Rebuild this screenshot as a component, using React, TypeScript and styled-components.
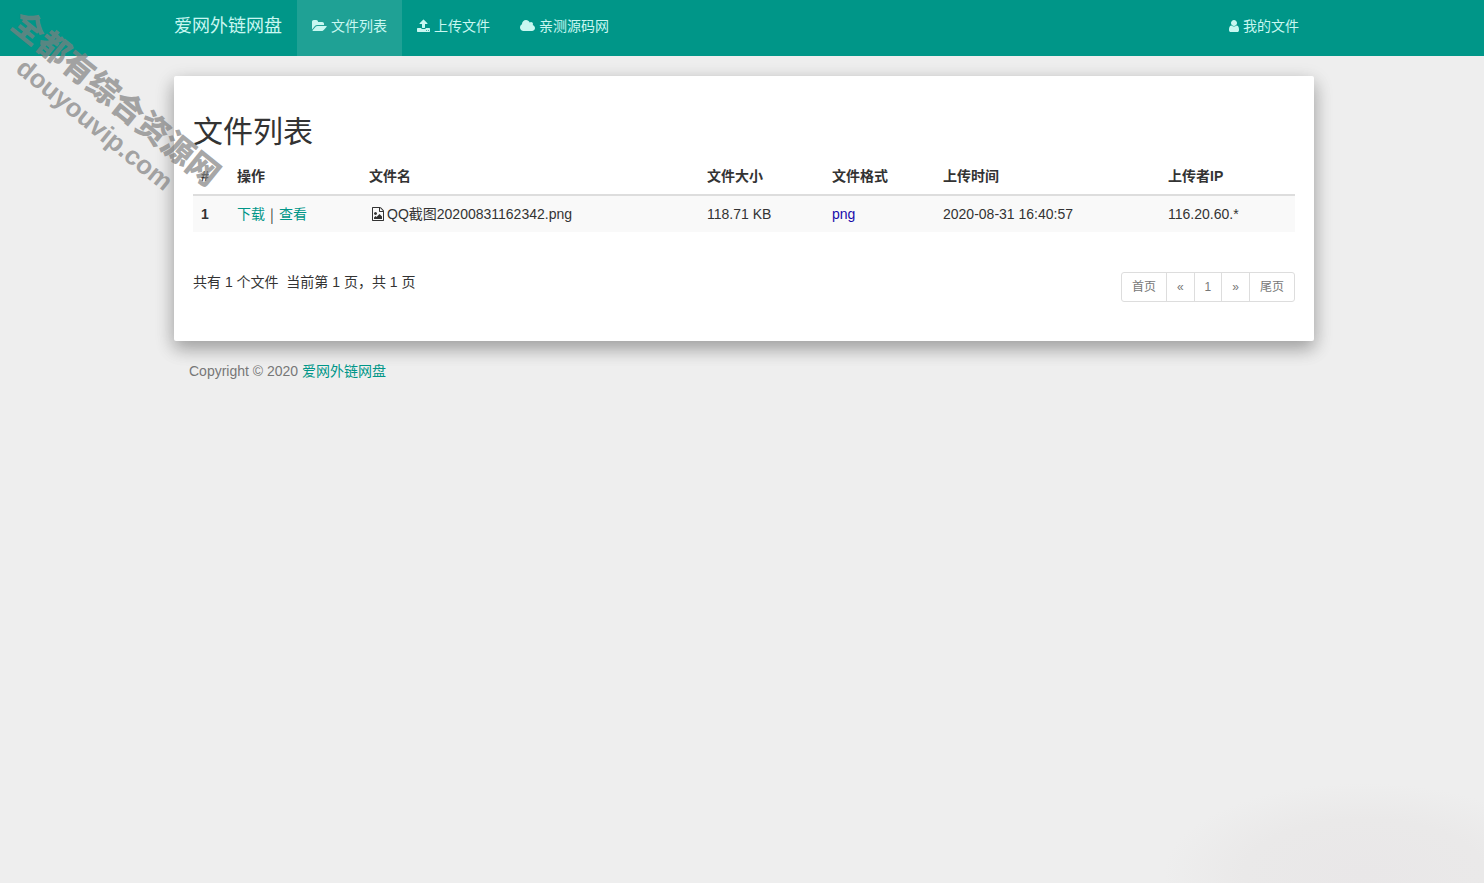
import React from "react";
import styled, { createGlobalStyle } from "styled-components";

const GlobalStyle = createGlobalStyle`
  *, *::before, *::after { box-sizing: border-box; }
  body {
    margin: 0;
    background: #eee;
    color: #333;
    font-family: "Liberation Sans", "Noto Sans CJK SC", sans-serif;
    font-size: 14px;
    line-height: 20px;
  }
  a { color: #009688; text-decoration: none; }
`;

const Page = styled.div`
  position: relative;
  min-height: 100vh;
  overflow: hidden;
  background:
    radial-gradient(ellipse 200px 90px at right 120px bottom 10px, #e9e7e8 0%, #eae9e9 60%, transparent 100%),
    #eee;
`;

const Container = styled.div`
  max-width: 1144px;
  margin: 0 auto;
  padding-left: 4px;
`;

const Header = styled.header`
  background: #009688;
`;

const Bar = styled(Container)`
  display: flex;
  min-height: 56px;
`;

const Brand = styled.a`
  padding: 16px 15px 20px 0;
  font-size: 18px;
  color: #c8f7f1;
`;

const NavLink = styled.a<{ $active?: boolean; $end?: boolean }>`
  display: flex;
  align-items: center;
  gap: 4px;
  padding: 16px 15px 20px;
  margin-left: ${(p) => (p.$end ? "auto" : "0")};
  color: #c8f7f1;
  background: ${(p) => (p.$active ? "#1fa195" : "transparent")};
`;

const NavGroup = styled.nav`
  display: flex;
  flex: 1;
`;

const Card = styled.main`
  margin-top: 20px;
  padding: 39px 19px;
  background: #fff;
  border-radius: 2px;
  box-shadow: 0 8px 17px 0 rgba(0, 0, 0, 0.2), 0 6px 20px 0 rgba(0, 0, 0, 0.19);
`;

const Title = styled.h2`
  margin: 0 0 10px;
  font-size: 30px;
  font-weight: 400;
  line-height: 33px;
`;

const FileTable = styled.table`
  width: 100%;
  border-collapse: collapse;
  table-layout: fixed;
  margin-bottom: 40px;
  th, td { padding: 8px; text-align: left; vertical-align: top; }
  thead th { border-bottom: 2px solid #ddd; }
  tbody tr:nth-child(odd) { background: #f9f9f9; }
`;

const Col = styled.col<{ $w?: number }>`
  width: ${(p) => (p.$w ? `${p.$w}px` : "auto")};
`;

const Actions = styled.div`
  display: flex;
`;

const Separator = styled.span`
  width: 14px;
  text-align: center;
  font-family: "Noto Sans CJK SC", sans-serif;
`;

const FileName = styled.span`
  display: flex;
  align-items: center;
`;

const IconSlot = styled.span`
  display: flex;
  justify-content: center;
  width: 18px;
`;

const Format = styled.span`
  color: #1a0dab;
`;

const TableFooter = styled.div`
  display: flex;
  justify-content: space-between;
  align-items: flex-start;
`;

const Summary = styled.p`
  margin: 0;
  white-space: pre-wrap;
`;

const Pager = styled.ul`
  display: flex;
  margin: 0;
  padding: 0;
  list-style: none;
  font-size: 12px;
  line-height: 18px;
`;

const PagerLink = styled.a`
  display: block;
  padding: 5px 10px;
  border: 1px solid #ddd;
  color: #777;
  li + li > & { margin-left: -1px; }
  li:first-child > & { border-radius: 3px 0 0 3px; }
  li:last-child > & { border-radius: 0 3px 3px 0; }
`;

const Footer = styled.footer`
  padding: 20px 15px;
  color: #777;
`;

const Watermark = styled.div`
  position: absolute;
  left: -23px;
  top: 79px;
  width: 256px;
  text-align: center;
  white-space: nowrap;
  font-weight: 900;
  font-size: 32px;
  line-height: 33px;
  color: rgba(128, 128, 128, 0.7);
  transform: rotate(39deg);
  pointer-events: none;
`;

const WatermarkSite = styled.div`
  font-size: 26px;
`;

const Glyph = ({ box, width, d }: { box: string; width: number; d: string }) => (
  <svg viewBox={box} width={width} height={14} fill="currentColor" aria-hidden="true">
    <path d={d} />
  </svg>
);

const FolderIcon = () => (
  <Glyph
    box="0 0 1920 1792"
    width={15}
    d="M1879 952q0 31-31 66l-336 396q-43 51-120.5 86.5t-143.5 35.5h-1088q-34 0-60.5-13t-26.5-43q0-31 31-66l336-396q43-51 120.5-86.5t143.5-35.5h1088q34 0 60.5 13t26.5 43zm-343-344v160h-832q-94 0-197 47.5t-164 119.5l-337 396-5 6q0-4-.5-12.5t-.5-12.5v-960q0-92 66-158t158-66h320q92 0 158 66t66 158v32h544q92 0 158 66t66 158z"
  />
);

const UploadIcon = () => (
  <Glyph
    box="64 0 1664 1792"
    width={13}
    d="M1344 1472q0-26-19-45t-45-19-45 19-19 45 19 45 45 19 45-19 19-45zm256 0q0-26-19-45t-45-19-45 19-19 45 19 45 45 19 45-19 19-45zm128-224v320q0 40-28 68t-68 28h-1472q-40 0-68-28t-28-68v-320q0-40 28-68t68-28h427q21 56 70.5 92t110.5 36h256q61 0 110.5-36t70.5-92h427q40 0 68 28t28 68zm-325-648q-17 40-59 40h-256v448q0 26-19 45t-45 19h-256q-26 0-45-19t-19-45v-448h-256q-42 0-59-40-17-39 14-69l448-448q18-19 45-19t45 19l448 448q31 30 14 69z"
  />
);

const CloudIcon = () => (
  <Glyph
    box="64 0 1920 1792"
    width={15}
    d="M1984 1152q0 159-112.5 271.5t-271.5 112.5h-1088q-185 0-316.5-131.5t-131.5-316.5q0-132 71-241.5t187-163.5q-2-28-2-43 0-212 150-362t362-150q158 0 286.5 88t187.5 230q70-62 166-62 106 0 181 75t75 181q0 75-41 138 129 30 213 134.5t84 239.5z"
  />
);

const UserIcon = () => (
  <Glyph
    box="256 0 1280 1792"
    width={10}
    d="M1536 1399q0 109-62.5 187t-150.5 78h-854q-88 0-150.5-78t-62.5-187q0-85 8.5-160.5t31.5-152 58.5-131 94-89 134.5-34.5q131 128 313 128t313-128q76 0 134.5 34.5t94 89 58.5 131 31.5 152 8.5 160.5zm-256-887q0 159-112.5 271.5t-271.5 112.5-271.5-112.5-112.5-271.5 112.5-271.5 271.5-112.5 271.5 112.5 112.5 271.5z"
  />
);

const ImageFileIcon = () => (
  <Glyph
    box="128 0 1536 1792"
    width={12}
    d="M1596 380q28 28 48 76t20 88v1152q0 40-28 68t-68 28h-1344q-40 0-68-28t-28-68v-1600q0-40 28-68t68-28h896q40 0 88 20t76 48zm-444-244v376h376q-10-29-22-41l-313-313q-12-12-41-22zm384 1528v-1024h-416q-40 0-68-28t-28-68v-416h-768v1536h1280zm-128-448v320h-1024v-192l192-192 128 128 384-384zm-832-192q-80 0-136-56t-56-136 56-136 136-56 136 56 56 136-56 136-136 56z"
  />
);

const headings = ["#", "操作", "文件名", "文件大小", "文件格式", "上传时间", "上传者IP"];
const pages = ["首页", "«", "1", "»", "尾页"];

export default function App() {
  return (
    <Page>
      <GlobalStyle />
      <Header>
        <Bar>
          <Brand href="#">爱网外链网盘</Brand>
          <NavGroup>
            <NavLink href="#" $active><FolderIcon />文件列表</NavLink>
            <NavLink href="#"><UploadIcon />上传文件</NavLink>
            <NavLink href="#"><CloudIcon />亲测源码网</NavLink>
            <NavLink href="#" $end><UserIcon />我的文件</NavLink>
          </NavGroup>
        </Bar>
      </Header>
      <Container>
        <Card>
          <Title>文件列表</Title>
          <FileTable>
            <colgroup>
              <Col $w={36} />
              <Col $w={132} />
              <Col />
              <Col $w={125} />
              <Col $w={111} />
              <Col $w={225} />
              <Col $w={135} />
            </colgroup>
            <thead>
              <tr>{headings.map((h) => <th key={h} scope="col">{h}</th>)}</tr>
            </thead>
            <tbody>
              <tr>
                <td><b>1</b></td>
                <td>
                  <Actions>
                    <a href="#">下载</a>
                    <Separator>|</Separator>
                    <a href="#">查看</a>
                  </Actions>
                </td>
                <td>
                  <FileName>
                    <IconSlot><ImageFileIcon /></IconSlot>
                    QQ截图20200831162342.png
                  </FileName>
                </td>
                <td>118.71 KB</td>
                <td><Format>png</Format></td>
                <td>2020-08-31 16:40:57</td>
                <td>116.20.60.*</td>
              </tr>
            </tbody>
          </FileTable>
          <TableFooter>
            <Summary>{"共有 1 个文件  当前第 1 页，共 1 页"}</Summary>
            <nav aria-label="分页">
              <Pager>
                {pages.map((p) => <li key={p}><PagerLink href="#">{p}</PagerLink></li>)}
              </Pager>
            </nav>
          </TableFooter>
        </Card>
        <Footer>Copyright © 2020 <a href="#">爱网外链网盘</a></Footer>
      </Container>
      <Watermark aria-hidden="true">
        全都有综合资源网
        <WatermarkSite>douyouvip.com</WatermarkSite>
      </Watermark>
    </Page>
  );
}
